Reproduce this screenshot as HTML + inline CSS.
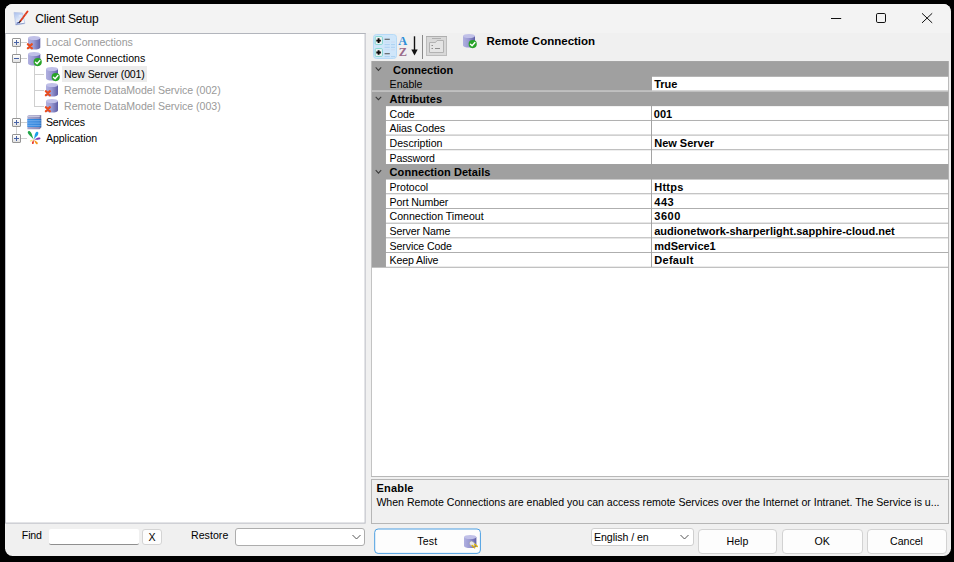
<!DOCTYPE html>
<html><head><meta charset="utf-8"><title>Client Setup</title>
<style>
html,body{margin:0;padding:0;background:#000;}
body{width:954px;height:562px;position:relative;overflow:hidden;font-family:"Liberation Sans", sans-serif;font-size:10.6px;color:#000;}
.a{position:absolute;}
.t{position:absolute;white-space:nowrap;line-height:16px;height:16px;}
#win{position:absolute;left:5px;top:4px;width:945.5px;height:552px;background:#f0f0f0;border-radius:7.5px;overflow:hidden;}
#tb{position:absolute;left:0;top:0;width:945px;height:29px;background:#f3f3f3;}
.exp{width:7px;height:7px;border:1px solid #959595;background:linear-gradient(#fff,#e2e2e2);border-radius:1px;}
.exp i{position:absolute;background:#4863a6;}
.exp i.h{left:1px;top:3px;width:5px;height:1px;}
.exp i.v{left:3px;top:1px;width:1px;height:5px;}
.btn{position:absolute;background:#fdfdfd;border:1px solid #d2d2d2;border-radius:4px;box-sizing:border-box;}
</style></head><body>
<div id="win"><div id="tb"></div></div>

<svg class='a' style='left:5px;top:33px' width='362' height='492' viewBox='5 33 362 492'><rect x='5' y='33' width='360.6' height='490.6' fill='#b9bcc3'/><rect x='5.9' y='34' width='358.7' height='488.6' fill='#fff'/><rect x='5' y='33' width='360.6' height='1' fill='#b2b5bc'/></svg>
<div class='a' style='left:62px;top:66px;width:84.5px;height:16px;background:#ececec'></div>
<div class='a' style='left:16px;top:47px;width:0;height:87px;border-left:1px solid #cfcfcf'></div>
<div class='a' style='left:21px;top:42px;width:6px;height:0;border-top:1px solid #cfcfcf'></div>
<div class='a' style='left:21px;top:58px;width:6px;height:0;border-top:1px solid #cfcfcf'></div>
<div class='a' style='left:21px;top:122px;width:6px;height:0;border-top:1px solid #cfcfcf'></div>
<div class='a' style='left:21px;top:138px;width:6px;height:0;border-top:1px solid #cfcfcf'></div>
<div class='a' style='left:34px;top:65px;width:0;height:42px;border-left:1px solid #cfcfcf'></div>
<div class='a' style='left:35px;top:74px;width:9px;height:0;border-top:1px solid #cfcfcf'></div>
<div class='a' style='left:35px;top:90px;width:9px;height:0;border-top:1px solid #cfcfcf'></div>
<div class='a' style='left:35px;top:106px;width:9px;height:0;border-top:1px solid #cfcfcf'></div>
<div class='a exp' style='left:12px;top:38px'><i class='h'></i><i class='v'></i></div>
<div class='a exp' style='left:12px;top:54px'><i class='h'></i></div>
<div class='a exp' style='left:12px;top:118px'><i class='h'></i><i class='v'></i></div>
<div class='a exp' style='left:12px;top:134px'><i class='h'></i><i class='v'></i></div>
<svg class='a' style='left:26.0px;top:34.5px' width='17.3' height='17.5' viewBox='-2 -1 17.3 17.5'><defs><linearGradient id='ga' x1='0' x2='1' y1='0' y2='0'><stop offset='0' stop-color='#b0b0e0'/><stop offset='0.45' stop-color='#9a9ad2'/><stop offset='1' stop-color='#5e5ea6'/></linearGradient></defs><path d='M0 2.0 L0 11.5 A6.15 2.0 0 0 0 12.3 11.5 L12.3 2.0 Z' fill='url(#ga)'/><ellipse cx='6.15' cy='2.0' rx='6.15' ry='2.0' fill='#c0c0e8'/><path d='M-0.1 8.3 L3.8 12.2 M3.8 8.3 L-0.1 12.2' stroke='#e94d1e' stroke-width='2.3' stroke-linecap='round'/></svg>
<svg class='a' style='left:26.0px;top:50.5px' width='17.3' height='17.5' viewBox='-2 -1 17.3 17.5'><defs><linearGradient id='gb' x1='0' x2='1' y1='0' y2='0'><stop offset='0' stop-color='#b0b0e0'/><stop offset='0.45' stop-color='#9a9ad2'/><stop offset='1' stop-color='#5e5ea6'/></linearGradient></defs><path d='M0 2.0 L0 11.5 A6.15 2.0 0 0 0 12.3 11.5 L12.3 2.0 Z' fill='url(#gb)'/><ellipse cx='6.15' cy='2.0' rx='6.15' ry='2.0' fill='#c0c0e8'/><circle cx='9.7' cy='10.1' r='4.1' fill='#27a327'/><path d='M7.5 10.2 L9.1 11.8 L11.9 8.5' stroke='#fff' stroke-width='1.4' fill='none' stroke-linecap='round'/></svg>
<svg class='a' style='left:44.1px;top:66.2px' width='17' height='17.5' viewBox='-2 -1 17 17.5'><defs><linearGradient id='gc' x1='0' x2='1' y1='0' y2='0'><stop offset='0' stop-color='#b0b0e0'/><stop offset='0.45' stop-color='#9a9ad2'/><stop offset='1' stop-color='#5e5ea6'/></linearGradient></defs><path d='M0 2.0 L0 11.5 A6.0 2.0 0 0 0 12 11.5 L12 2.0 Z' fill='url(#gc)'/><ellipse cx='6.0' cy='2.0' rx='6.0' ry='2.0' fill='#c0c0e8'/><circle cx='9.7' cy='10.1' r='4.1' fill='#27a327'/><path d='M7.5 10.2 L9.1 11.8 L11.9 8.5' stroke='#fff' stroke-width='1.4' fill='none' stroke-linecap='round'/></svg>
<svg class='a' style='left:44.1px;top:82.2px' width='17' height='17.5' viewBox='-2 -1 17 17.5'><defs><linearGradient id='gd' x1='0' x2='1' y1='0' y2='0'><stop offset='0' stop-color='#b0b0e0'/><stop offset='0.45' stop-color='#9a9ad2'/><stop offset='1' stop-color='#5e5ea6'/></linearGradient></defs><path d='M0 2.0 L0 11.5 A6.0 2.0 0 0 0 12 11.5 L12 2.0 Z' fill='url(#gd)'/><ellipse cx='6.0' cy='2.0' rx='6.0' ry='2.0' fill='#c0c0e8'/><path d='M-0.1 8.3 L3.8 12.2 M3.8 8.3 L-0.1 12.2' stroke='#e94d1e' stroke-width='2.3' stroke-linecap='round'/></svg>
<svg class='a' style='left:44.1px;top:98.2px' width='17' height='17.5' viewBox='-2 -1 17 17.5'><defs><linearGradient id='ge' x1='0' x2='1' y1='0' y2='0'><stop offset='0' stop-color='#b0b0e0'/><stop offset='0.45' stop-color='#9a9ad2'/><stop offset='1' stop-color='#5e5ea6'/></linearGradient></defs><path d='M0 2.0 L0 11.5 A6.0 2.0 0 0 0 12 11.5 L12 2.0 Z' fill='url(#ge)'/><ellipse cx='6.0' cy='2.0' rx='6.0' ry='2.0' fill='#c0c0e8'/><path d='M-0.1 8.3 L3.8 12.2 M3.8 8.3 L-0.1 12.2' stroke='#e94d1e' stroke-width='2.3' stroke-linecap='round'/></svg>
<svg class='a' style='left:27px;top:114px' width='15' height='16' viewBox='27 114 15 16'>
<defs><linearGradient id='sv' x1='0' x2='1'><stop offset='0' stop-color='#a9a8cc'/><stop offset='0.8' stop-color='#8f8db8'/><stop offset='1' stop-color='#6f6d9c'/></linearGradient>
<linearGradient id='sb' x1='0' x2='1'><stop offset='0' stop-color='#3a8fe6'/><stop offset='0.85' stop-color='#2a7fd8'/><stop offset='1' stop-color='#1f62b0'/></linearGradient></defs>
<path d='M27.4 116 L29 114.9 L41.2 114.9 L41.2 127.6 L39.6 129.2 L27.4 129.2Z' fill='url(#sv)'/>
<path d='M28.2 115.4 L40.6 115.4 L39.4 117 L27.6 117Z' fill='#c6c6de'/>
<rect x='27.4' y='118.9' width='13.8' height='8' fill='#9cc4f2'/>
<rect x='27.4' y='119' width='13.8' height='1.5' fill='url(#sb)'/><rect x='27.4' y='121.2' width='13.8' height='1.5' fill='url(#sb)'/><rect x='27.4' y='123.4' width='13.8' height='1.5' fill='url(#sb)'/><rect x='27.4' y='125.5' width='13.8' height='1.4' fill='url(#sb)'/>
</svg>
<svg class='a' style='left:26px;top:130px' width='16' height='16' viewBox='26 130 16 16'><path d='M33.70 139.50 C32.17 136.39 32.29 133.98 30.87 132.19 C29.62 130.66 28.75 130.74 28.40 131.20 C27.84 131.33 27.40 132.08 28.26 133.86 C29.28 135.89 31.52 136.80 33.70 139.50Z' fill='#22a648' opacity='1'/><path d='M33.70 139.50 C35.42 137.08 37.37 136.22 38.10 134.42 C38.70 132.83 38.23 132.19 37.70 132.10 C37.33 131.71 36.54 131.66 35.54 133.04 C34.43 134.64 34.78 136.74 33.70 139.50Z' fill='#1aa0e6' opacity='1'/><path d='M33.70 139.50 C36.10 139.31 37.63 140.03 39.14 139.57 C40.44 139.14 40.61 138.55 40.40 138.20 C40.46 137.80 40.09 137.31 38.72 137.41 C37.14 137.54 35.99 138.78 33.70 139.50Z' fill='#7a3cb0' opacity='1'/><path d='M33.70 139.50 C34.84 141.24 34.91 142.72 35.90 143.66 C36.77 144.46 37.31 144.32 37.50 144.00 C37.84 143.86 38.07 143.36 37.43 142.36 C36.67 141.23 35.22 140.91 33.70 139.50Z' fill='#f3981c' opacity='1'/><path d='M33.70 139.50 C33.08 141.02 32.03 141.72 31.92 142.78 C31.84 143.72 32.26 144.01 32.60 144.00 C32.90 144.17 33.41 144.10 33.76 143.24 C34.16 142.23 33.55 141.13 33.70 139.50Z' fill='#ea3a2c' opacity='1'/><path d='M33.70 139.50 C32.32 139.95 31.26 139.66 30.46 140.18 C29.78 140.65 29.80 141.08 30.00 141.30 C30.05 141.59 30.37 141.88 31.16 141.62 C32.07 141.32 32.49 140.31 33.70 139.50Z' fill='#f6df70' opacity='0.9'/></svg>
<svg class='a' style='left:371px;top:61px' width='578' height='416' viewBox='371 61 578 416'><rect x='371' y='61' width='578' height='416' fill='#fff'/><rect x='371.5' y='61.05' width='577.5' height='206.60' fill='#a0a0a0'/><rect x='385.95' y='106.14' width='265.1' height='13.84' fill='#fff'/><rect x='385.95' y='120.82' width='265.1' height='13.84' fill='#fff'/><rect x='385.95' y='135.50' width='265.1' height='13.84' fill='#fff'/><rect x='385.95' y='150.18' width='265.1' height='13.84' fill='#fff'/><rect x='385.95' y='179.54' width='265.1' height='13.84' fill='#fff'/><rect x='385.95' y='194.22' width='265.1' height='13.84' fill='#fff'/><rect x='385.95' y='208.90' width='265.1' height='13.84' fill='#fff'/><rect x='385.95' y='223.58' width='265.1' height='13.84' fill='#fff'/><rect x='385.95' y='238.26' width='265.1' height='13.84' fill='#fff'/><rect x='385.95' y='252.94' width='265.1' height='13.84' fill='#fff'/><rect x='652' y='76.78' width='297' height='13.84' fill='#fff'/><rect x='652' y='106.14' width='297' height='13.84' fill='#fff'/><rect x='652' y='120.82' width='297' height='13.84' fill='#fff'/><rect x='652' y='135.50' width='297' height='13.84' fill='#fff'/><rect x='652' y='150.18' width='297' height='13.84' fill='#fff'/><rect x='652' y='179.54' width='297' height='13.84' fill='#fff'/><rect x='652' y='194.22' width='297' height='13.84' fill='#fff'/><rect x='652' y='208.90' width='297' height='13.84' fill='#fff'/><rect x='652' y='223.58' width='297' height='13.84' fill='#fff'/><rect x='652' y='238.26' width='297' height='13.84' fill='#fff'/><rect x='652' y='252.94' width='297' height='13.84' fill='#fff'/><rect x='371.5' y='90.44' width='577.5' height='1.2' fill='#d2d2d2'/><path d='M375.7 67.47 L378.45 70.37 L381.2 67.47' stroke='#3a3a3a' stroke-width='1.05' fill='none'/><path d='M375.7 96.83 L378.45 99.73 L381.2 96.83' stroke='#3a3a3a' stroke-width='1.05' fill='none'/><path d='M375.7 170.23 L378.45 173.13 L381.2 170.23' stroke='#3a3a3a' stroke-width='1.05' fill='none'/><rect x='371' y='61' width='0.9' height='416' fill='#bdbdbd'/><rect x='371' y='476' width='578' height='1' fill='#b8b8b8'/><rect x='948.1' y='61' width='0.9' height='416' fill='#b4b4b4'/></svg>
<div class='a' style='left:371px;top:479px;width:578px;height:44.5px;border:1px solid #b6b6b6;box-sizing:border-box;background:#f0f0f0'></div>
<div class='a' style='left:373px;top:34px;width:24px;height:25px;background:#cfe6fa;border:1px solid #b6daf7;border-radius:3.5px;box-sizing:border-box'></div>
<div class='a' style='left:422px;top:35px;width:1px;height:24px;background:#8a8a8a'></div>
<svg class='a' style='left:374px;top:35px' width='23' height='23' viewBox='374 35 23 23'>
<rect x='375.2' y='36.6' width='7.2' height='7.8' rx='1' fill='#f1f3f3' stroke='#74d2ca' stroke-width='0.9'/>
<rect x='375.2' y='48.6' width='7.2' height='7.8' rx='1' fill='#f1f3f3' stroke='#74d2ca' stroke-width='0.9'/>
<path d='M376.3 40.6h4.6M378.6 38.3v4.6M376.3 52.5h4.6M378.6 50.2v4.6' stroke='#0a0a0a' stroke-width='1.9'/>
<path d='M384.6 39.2h5.2M384.6 53.8h5.2' stroke='#4c4c4c' stroke-width='1.1'/>
<g stroke-width='0.9' opacity='0.75'>
<path d='M384.6 42.1h5.2M391 42.1h4' stroke='#c9d6ee'/>
<path d='M384.6 44.6h5.2M391 44.6h4' stroke='#9cc6ee'/>
<path d='M384.6 47.3h5.2M391 47.3h4' stroke='#9cc6ee'/>
<path d='M384.6 49.8h5.2M391 49.8h4' stroke='#c9d6ee'/>
<path d='M384.6 56.6h5.2M391 56.6h4' stroke='#9cc6ee'/>
</g>
</svg>
<div class='t' style='left:398.2px;top:34.5px;font-family:"Liberation Serif",serif;font-weight:bold;font-size:12.4px;color:#2f8fd8;line-height:12px;height:12px;transform:scaleY(1.09);transform-origin:0 100%'>A</div>
<div class='t' style='left:398.7px;top:45.5px;font-family:"Liberation Serif",serif;font-weight:bold;font-size:12.4px;color:#9a6a8a;line-height:12px;height:12px;transform:scaleY(1.09);transform-origin:0 100%'>Z</div>
<svg class='a' style='left:409px;top:35px' width='11' height='22'><path d='M5.5 1.3v17' stroke='#111' stroke-width='1.4'/><path d='M2.3 14.5 L5.5 20.6 L8.7 14.5Z' fill='#111'/></svg>
<svg class='a' style='left:426px;top:36px' width='21' height='20' viewBox='0 0 21 20'>
<rect x='0.5' y='0.5' width='20' height='19' fill='#d8d8d8' stroke='#bcbcbc'/>
<path d='M0 0.5h21' stroke='#aeaeae'/>
<path d='M3.5 16.5 V6.5 H9.5 L11 4.5 H17.5 V16.5Z' fill='#e4e4e4' stroke='#b2b2b2'/>
<path d='M6 2.5h9' stroke='#b0b0b0'/><path d='M5.5 9.5h1.5M5.5 12.5h1.5M9 12.5h5' stroke='#8e8e8e'/>
</svg>
<svg class='a' style='left:460.7px;top:33.4px' width='17' height='17.5' viewBox='-2 -1 17 17.5'><defs><linearGradient id='gf' x1='0' x2='1' y1='0' y2='0'><stop offset='0' stop-color='#b0b0e0'/><stop offset='0.45' stop-color='#9a9ad2'/><stop offset='1' stop-color='#5e5ea6'/></linearGradient></defs><path d='M0 2.0 L0 11.5 A6.0 2.0 0 0 0 12 11.5 L12 2.0 Z' fill='url(#gf)'/><ellipse cx='6.0' cy='2.0' rx='6.0' ry='2.0' fill='#c0c0e8'/><circle cx='9.7' cy='10.1' r='4.1' fill='#27a327'/><path d='M7.5 10.2 L9.1 11.8 L11.9 8.5' stroke='#fff' stroke-width='1.4' fill='none' stroke-linecap='round'/></svg>
<svg class='a' style='left:12px;top:9px' width='18' height='18' viewBox='12 9 18 18'>
<defs><linearGradient id='pg' x1='0' y1='0' x2='0.5' y2='1'><stop offset='0' stop-color='#a6bdec'/><stop offset='0.5' stop-color='#d2dff6'/><stop offset='1' stop-color='#fbfcff'/></linearGradient></defs>
<path d='M14 12.4 L22.6 13 L24.9 23.5 L15.8 25Z' fill='url(#pg)' stroke='#b3c2e4' stroke-width='0.7'/>
<path d='M15.7 24.6 L24.6 23.2' stroke='#8797c6' stroke-width='0.9'/>
<path d='M18.8 15.9 h3.2' stroke='#eef3fd' stroke-width='0.9'/>
<path d='M16.6 23.3 L19.5 22.4' stroke='#3a4fa6' stroke-width='1.1'/>
<path d='M27.5 11.5 L20.3 21.2' stroke='#e63a1a' stroke-width='1.9' stroke-linecap='round'/>
<path d='M24.9 13.9 L26.1 14.8 M22.3 17.4 L23.5 18.3' stroke='#8a8a92' stroke-width='0.7'/>
<path d='M20.3 21.2 L19.3 22.5' stroke='#2a2a2a' stroke-width='1.2' stroke-linecap='round'/>
</svg>
<svg class='a' style='left:826px;top:8px' width='112' height='22' viewBox='826 8 112 22'><path d='M831 18.5h10.2' stroke='#111' stroke-width='1'/><rect x='876.5' y='13.5' width='9' height='9' rx='1.3' fill='none' stroke='#111' stroke-width='1'/><path d='M922 13.3 L932.2 22.9 M932.2 13.3 L922 22.9' stroke='#111' stroke-width='1'/></svg>
<div class='a' style='left:48.5px;top:528.5px;width:90px;height:16.5px;background:#fff;border-bottom:1px solid #8f8f8f;border-radius:2px;box-sizing:border-box'></div>
<div class='btn' style='left:142px;top:529px;width:19.5px;height:15.5px;border-radius:3px;border-color:#d4d4d4'></div>
<div class='a' style='left:235px;top:528px;width:130.4px;height:18.4px;background:#fff;border:1px solid #adadad;border-radius:3px;box-sizing:border-box'></div>
<svg class='a' style='left:351px;top:533px' width='11' height='8'><path d='M1.5 2 L5.5 6 L9.5 2' stroke='#555' stroke-width='1' fill='none'/></svg>
<svg class='a' style='left:373px;top:527px' width='110' height='29' viewBox='373 527 110 29'><rect x='374.7' y='529' width='105.7' height='24.4' rx='3.4' fill='#fdfdfd' stroke='#4c9fe2' stroke-width='1'/></svg>
<div class='a' style='left:591px;top:528px;width:102.6px;height:18.4px;background:#fff;border:1px solid #cfcfcf;border-radius:3px;box-sizing:border-box'></div>
<svg class='a' style='left:679px;top:533px' width='11' height='8'><path d='M1.5 2 L5.5 6 L9.5 2' stroke='#555' stroke-width='1' fill='none'/></svg>
<div class='btn' style='left:698px;top:529px;width:79.2px;height:24.5px'></div>
<div class='btn' style='left:782px;top:529px;width:80.8px;height:24.5px'></div>
<div class='btn' style='left:867px;top:529px;width:80px;height:24.5px'></div>
<svg class='a' style='left:462.4px;top:533.6px' width='17.4' height='17' viewBox='-2 -1 17.4 17'><defs><linearGradient id='gt' x1='0' x2='1' y1='0' y2='0'><stop offset='0' stop-color='#b0b0e0'/><stop offset='0.45' stop-color='#9a9ad2'/><stop offset='1' stop-color='#5e5ea6'/></linearGradient></defs><path d='M0 2.0 L0 11.0 A6.2 2.0 0 0 0 12.4 11.0 L12.4 2.0 Z' fill='url(#gt)'/><ellipse cx='6.2' cy='2.0' rx='6.2' ry='2.0' fill='#c0c0e8'/></svg>
<svg class='a' style='left:467px;top:540px' width='13' height='10' viewBox='467 540 13 10'>
<ellipse cx='472.2' cy='543.8' rx='3.1' ry='2.3' transform='rotate(35 472.2 543.8)' fill='#e6e6ea' stroke='#9a9aa6' stroke-width='0.6'/>
<path d='M472.2 545.5 L474.6 547.6 M474.8 544.3 L477.2 546.4' stroke='#e2bb18' stroke-width='1.6' stroke-linecap='round'/>
<path d='M472.4 546.2 L474.4 548 M475.0 545 L477.0 546.8' stroke='#9a7c10' stroke-width='0.4'/>
</svg>
<div class='t' style='left:35.2px;top:11px;font-size:12px;letter-spacing:-0.170px;'>Client Setup</div>
<div class='t' style='left:45.9px;top:34px;color:#9a9a9a;letter-spacing:-0.011px;'>Local Connections</div>
<div class='t' style='left:45.9px;top:50px;letter-spacing:0.027px;'>Remote Connections</div>
<div class='t' style='left:64.1px;top:66px;letter-spacing:-0.148px;'>New Server (001)</div>
<div class='t' style='left:64.1px;top:82px;color:#9a9a9a;letter-spacing:-0.021px;'>Remote DataModel Service (002)</div>
<div class='t' style='left:64.1px;top:98px;color:#9a9a9a;letter-spacing:-0.021px;'>Remote DataModel Service (003)</div>
<div class='t' style='left:45.9px;top:114px;letter-spacing:-0.218px;'>Services</div>
<div class='t' style='left:45.9px;top:130px;letter-spacing:-0.053px;'>Application</div>
<div class='t' style='left:486.5px;top:33px;font-size:11.5px;font-weight:bold;'>Remote Connection</div>
<div class='t' style='left:393.1px;top:62px;font-size:11px;font-weight:bold;letter-spacing:-0.044px;'>Connection</div>
<div class='t' style='left:389.6px;top:76px;letter-spacing:-0.020px;'>Enable</div>
<div class='t' style='left:389.6px;top:91px;font-size:11px;font-weight:bold;letter-spacing:0.061px;'>Attributes</div>
<div class='t' style='left:389.6px;top:106px;letter-spacing:-0.076px;'>Code</div>
<div class='t' style='left:389.6px;top:120px;letter-spacing:-0.113px;'>Alias Codes</div>
<div class='t' style='left:389.6px;top:135px;letter-spacing:-0.010px;'>Description</div>
<div class='t' style='left:389.6px;top:150px;letter-spacing:-0.159px;'>Password</div>
<div class='t' style='left:389.6px;top:164px;font-size:11px;font-weight:bold;letter-spacing:0.069px;'>Connection Details</div>
<div class='t' style='left:389.6px;top:179px;letter-spacing:-0.039px;'>Protocol</div>
<div class='t' style='left:389.6px;top:194px;letter-spacing:-0.136px;'>Port Number</div>
<div class='t' style='left:389.6px;top:208px;letter-spacing:-0.014px;'>Connection Timeout</div>
<div class='t' style='left:389.6px;top:223px;letter-spacing:-0.171px;'>Server Name</div>
<div class='t' style='left:389.6px;top:238px;letter-spacing:-0.118px;'>Service Code</div>
<div class='t' style='left:389.6px;top:252px;letter-spacing:-0.129px;'>Keep Alive</div>
<div class='t' style='left:654.2px;top:76px;font-size:11px;font-weight:bold;'>True</div>
<div class='t' style='left:653.8px;top:106px;font-size:11px;font-weight:bold;'>001</div>
<div class='t' style='left:654.2px;top:135px;font-size:11px;font-weight:bold;'>New Server</div>
<div class='t' style='left:654.2px;top:179px;font-size:11px;font-weight:bold;letter-spacing:0.273px;'>Https</div>
<div class='t' style='left:654.2px;top:194px;font-size:11px;font-weight:bold;letter-spacing:0.600px;'>443</div>
<div class='t' style='left:654.2px;top:208px;font-size:11px;font-weight:bold;letter-spacing:0.600px;'>3600</div>
<div class='t' style='left:654.2px;top:223px;font-size:11px;font-weight:bold;letter-spacing:0.009px;'>audionetwork-sharperlight.sapphire-cloud.net</div>
<div class='t' style='left:654.2px;top:238px;font-size:11px;font-weight:bold;letter-spacing:-0.030px;'>mdService1</div>
<div class='t' style='left:654.2px;top:252px;font-size:11px;font-weight:bold;letter-spacing:0.320px;'>Default</div>
<div class='t' style='left:376.5px;top:480px;font-size:11px;font-weight:bold;letter-spacing:0.184px;'>Enable</div>
<div class='t' style='left:376.4px;top:494px;letter-spacing:-0.022px;'>When Remote Connections are enabled you can access remote Services over the Internet or Intranet. The Service is u...</div>
<div class='t' style='left:21.8px;top:527px;letter-spacing:-0.136px;'>Find</div>
<div class='t' style='left:148.5px;top:529px;'>X</div>
<div class='t' style='left:191.0px;top:527px;letter-spacing:0.034px;'>Restore</div>
<div class='t' style='left:417.2px;top:533px;letter-spacing:0.188px;'>Test</div>
<div class='t' style='left:594.0px;top:529px;letter-spacing:-0.069px;'>English / en</div>
<div class='t' style='left:726.5px;top:533px;'>Help</div>
<div class='t' style='left:814.4px;top:533px;'>OK</div>
<div class='t' style='left:890.0px;top:533px;'>Cancel</div>
</body></html>
